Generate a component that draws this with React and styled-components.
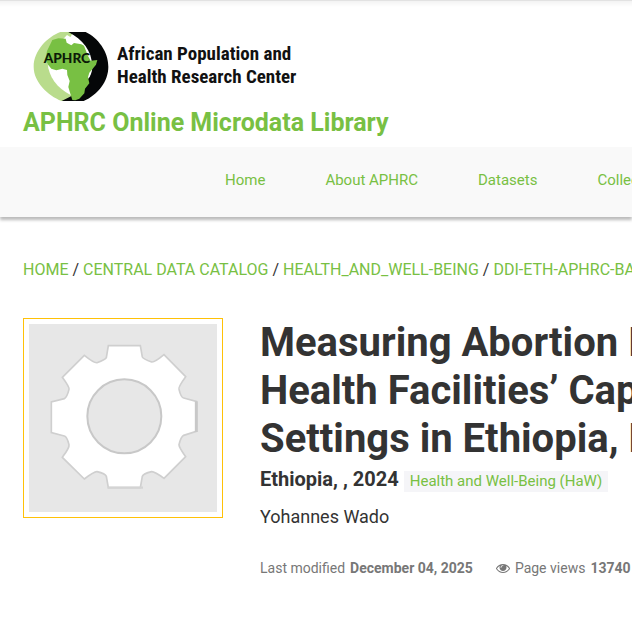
import styled, { createGlobalStyle } from "styled-components";

const menu = ["Home", "About APHRC", "Datasets", "Collections"];

const crumbs = [
    "Home",
    "Central Data Catalog",
    "Health_and_Well-Being",
    "DDI-ETH-APHRC-BASELINE",
];

export default function App() {
    return (
        <Page>
            <GlobalStyle />
            <Header>
                <Brand href="#">
                    <LogoMark />
                    <BrandName>
                        African Population and
                        <br />
                        Health Research Center
                    </BrandName>
                </Brand>
                <SiteTitle href="#">APHRC Online Microdata Library</SiteTitle>
            </Header>
            <Nav>
                {menu.map((item) => (
                    <NavLink key={item} href="#">
                        {item}
                    </NavLink>
                ))}
            </Nav>
            <Main>
                <Breadcrumb aria-label="Breadcrumb">
                    {crumbs.map((crumb, index) => (
                        <span key={crumb}>
                            {index > 0 && " / "}
                            <Link href="#">{crumb}</Link>
                        </span>
                    ))}
                </Breadcrumb>
                <Study>
                    <Thumbnail>
                        <Gear />
                    </Thumbnail>
                    <Details>
                        <Title>
                            Measuring Abortion Incidence
                            <br />
                            Health Facilities’ Capacity
                            <br />
                            Settings in Ethiopia, Kenya
                        </Title>
                        <Subtitle>
                            <Country>Ethiopia, , 2024</Country>
                            <Badge href="#">Health and Well-Being (HaW)</Badge>
                        </Subtitle>
                        <Author>Yohannes Wado</Author>
                        <Stats>
                            <Stat>
                                <span>Last modified</span>
                                <b>December 04, 2025</b>
                            </Stat>
                            <Stat>
                                <Eye />
                                <span>Page views</span>
                                <b>13740</b>
                            </Stat>
                        </Stats>
                    </Details>
                </Study>
            </Main>
        </Page>
    );
}

function LogoMark() {
    return (
        <svg width="76" height="69" viewBox="40 36 228 207" aria-hidden="true">
            <path
                fill="#b9dc8c"
                d="M122 36C84 50 42 92 42 140c0 46 42 86 84 103h10l28-17L100 130l62-94z"
            />
            <path
                fill="#fff"
                d="M84 130c3 40 27 74 70 96l26-15 38-60-10-66-66-40-14 15z"
            />
            <path
                fill="#050708"
                d="M146 36h52c37 18 68 58 68 104 0 44-31 84-74 103h-66c50-20 91-62 91-107 0-43-28-78-71-100z"
            />
            <path
                fill="#fff"
                d="M137 61c4-7 10-11 18-8 6 8 13 14 29 15l4 10-50-5zM214 130c7 6 5 26-6 44l-7-12z"
            />
            <path
                fill="#78c043"
                d="M98 60l18-5 22 1 3 12 14 8 8-7 22 4 8 4 12 31 8 14 20-2-4 14-20 24-4 14 4 18-13 16-2 14-15 16-12 5-9-1-6-19-6-20 4-18-7-18-1-15-14-4-18 5-15-5-11-13-6-16 4-24z"
            />
            <LogoText x="72" y="130">
                APHRC
            </LogoText>
        </svg>
    );
}

function Gear() {
    return (
        <svg width="188" height="188" viewBox="0 0 564 564" aria-hidden="true">
            <path
                fill="#fff"
                stroke="#cfcfcf"
                strokeWidth="5"
                d="M238 65h96l6 34q3 6 28 15q8 2 37-22l65 66q-24 33-20 38q6 25 14 26l38 10v90l-38 12q-8 4-14 28q0 8 20 36l-65 65q-29-21-37-20q-25 6-28 14l-6 34h-96l-6-34q-3-8-28-14q-8-1-38 22l-66-65q22-29 20-38q-6-24-14-26l-39-10v-92l39-10q8-4 14-28q2-6-20-36l66-66q30 24 38 22q25-9 28-15z"
            />
            <path stroke="#c8c8c8" strokeWidth="9" d="M502 232v92" />
            <path stroke="#d4d4d4" strokeWidth="7" d="M236 491h106" />
            <circle
                cx="286"
                cy="277"
                r="111"
                fill="#e7e7e7"
                stroke="#c8c8c8"
                strokeWidth="6"
            />
        </svg>
    );
}

function Eye() {
    return (
        <svg
            width="14"
            height="14"
            viewBox="0 0 1792 1792"
            fill="currentColor"
            aria-hidden="true"
        >
            <path d="M1664 960q-152-236-381-353 61 104 61 225 0 185-131.5 316.5t-316.5 131.5-316.5-131.5-131.5-316.5q0-121 61-225-229 117-381 353 133 205 333.5 326.5t434.5 121.5 434.5-121.5 333.5-326.5zm-720-384q0-20-14-34t-34-14q-125 0-214.5 89.5t-89.5 214.5q0 20 14 34t34 14 34-14 14-34q0-86 61-147t147-61q20 0 34-14t14-34zm848 384q0 34-20 69-140 230-376.5 368.5t-499.5 138.5-499.5-139-376.5-368q-20-35-20-69t20-69q140-229 376.5-368t499.5-139 499.5 139 376.5 368q20 35 20 69z" />
        </svg>
    );
}

const GlobalStyle = createGlobalStyle`
    * {
        box-sizing: border-box;
    }

    body {
        margin: 0;
        background: #fff;
        color: #333;
        font-family: Roboto, sans-serif;
        font-size: 16px;
        line-height: 24px;
    }

    a {
        color: #78c043;
        text-decoration: none;
    }
`;

const Page = styled.div`
    overflow: hidden;
    white-space: nowrap;
`;

const Header = styled.header`
    display: flex;
    flex-direction: column;
    align-items: flex-start;
    padding: 31px 23px 6px;
    border-top: 1px solid #e2e2e2;
    background: linear-gradient(#f3f3f3, #fff 6px);
`;

const Brand = styled.a`
    display: flex;
    gap: 8px;
    padding-left: 10px;
`;

const BrandName = styled.span`
    padding-top: 10px;
    color: #111;
    font-family: "Liberation Sans Narrow", "Roboto Condensed", Roboto, sans-serif;
    font-size: 19px;
    font-weight: 700;
    line-height: 23px;
`;

const LogoText = styled.text`
    fill: #0c1a08;
    font-family: Lato, sans-serif;
    font-size: 41px;
    font-weight: 900;
`;

const SiteTitle = styled.a`
    padding-top: 4px;
    font-size: 25px;
    font-weight: 700;
    line-height: 36px;
`;

const Nav = styled.nav`
    display: flex;
    gap: 60px;
    padding: 21px 0 25px 225px;
    background: #f9f9f9;
    box-shadow: 0 3px 3px #bbb;
`;

const NavLink = styled.a`
    font-size: 15px;
`;

const Main = styled.main`
    padding: 41px 23px;
`;

const Breadcrumb = styled.nav`
    text-transform: uppercase;
`;

const Link = styled.a`
    color: #78c043;
`;

const Study = styled.section`
    display: flex;
    align-items: flex-start;
    gap: 37px;
    padding-top: 36px;
`;

const Thumbnail = styled.div`
    flex: none;
    padding: 5px;
    border: 1px solid #ffc107;

    svg {
        display: block;
        background: #e7e7e7;
    }
`;

const Details = styled.div`
    min-width: 0;
`;

const Title = styled.h1`
    margin: 0;
    padding-top: 1px;
    font-size: 40px;
    font-weight: 700;
    line-height: 48px;
`;

const Subtitle = styled.div`
    display: flex;
    align-items: flex-start;
    gap: 5px;
    padding-top: 4px;
`;

const Country = styled.h2`
    margin: 0;
    font-size: 20px;
    font-weight: 700;
    line-height: 24px;
`;

const Badge = styled.a`
    margin-top: 4px;
    padding: 0 6px;
    background: #f5f5f8;
    font-size: 15px;
    line-height: 21px;
`;

const Author = styled.div`
    padding-top: 13px;
    font-size: 18px;
`;

const Stats = styled.div`
    display: flex;
    gap: 23px;
    padding-top: 27px;
    color: #777;
    font-size: 14px;
`;

const Stat = styled.span`
    display: flex;
    align-items: center;
    gap: 5px;
`;
